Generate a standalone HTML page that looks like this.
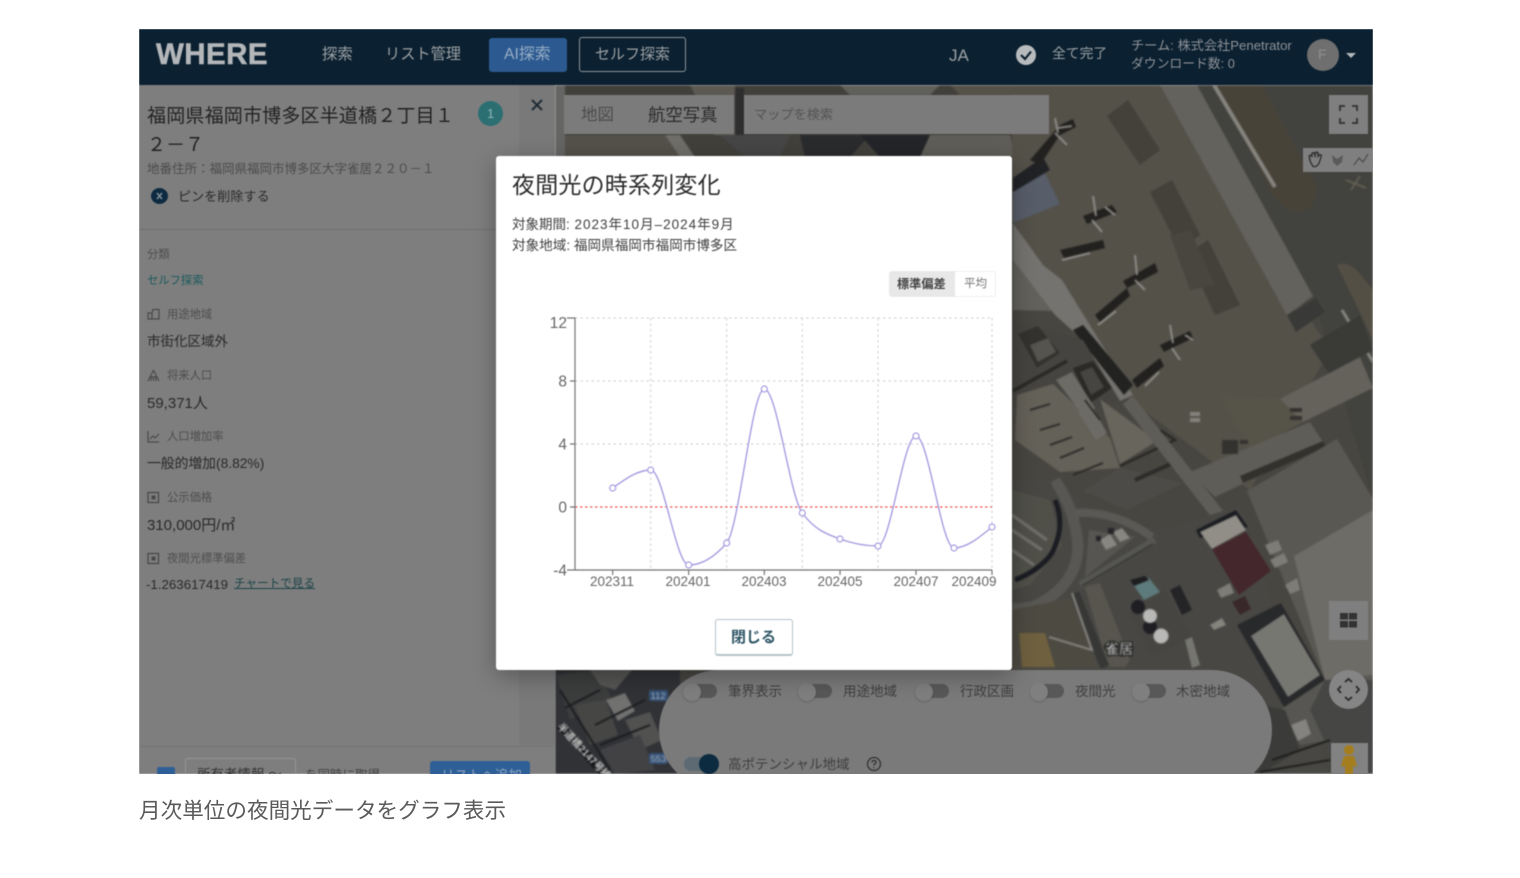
<!DOCTYPE html>
<html lang="ja">
<head>
<meta charset="utf-8">
<title>WHERE</title>
<style>
html,body{margin:0;padding:0;background:#fff;width:1520px;height:878px;overflow:hidden}
body{font-family:"Liberation Sans","Noto Sans CJK JP",sans-serif;position:relative}
#shot{position:absolute;left:0;top:0;width:1520px;height:878px;clip-path:inset(29px 147px 104px 139px);filter:blur(.4px)}
.a{position:absolute}
.t{position:absolute;white-space:nowrap;line-height:1}
.sw{position:absolute;width:20px;height:14px;background:#585858;border-radius:0 7px 7px 0}
.kn{position:absolute;width:18px;height:18px;border-radius:50%;background:#7f7f7f;box-shadow:0 1px 2px rgba(0,0,0,.18)}
.lab{color:#4e4e4e;font-size:11.3px}
.tg{color:#3f3f3f;font-size:13.5px}
</style>
</head>
<body>
<div id="shot">
  <!-- map -->
  <svg class="a" style="left:0;top:0;filter:blur(.7px) saturate(.75) brightness(.95)" width="1520" height="878" viewBox="0 0 1520 878">
    <rect x="555" y="85" width="818" height="689" fill="#4d4a42"/>
    <!-- top sliver -->
    <rect x="555" y="85" width="460" height="72" fill="#46433d"/>
    <polygon points="555,135 680,135 690,157 555,157" fill="#59554b"/>
    <polygon points="665,135 680,135 695,157 680,157" fill="#76746d"/>
    <polygon points="555,85 565,85 565,157 555,157" fill="#6a6a68"/>
    <polygon points="690,85 735,85 735,135 715,135" fill="#625e55"/>
    <polygon points="720,135 790,135 780,157 745,157" fill="#4a4a49"/>
    <polygon points="800,135 870,135 850,157 805,157" fill="#2c2d30"/>
    <polygon points="860,135 960,135 945,157 880,157" fill="#24272c"/>
    <polygon points="930,135 1010,135 1015,157 920,157" fill="#66635a"/>
    <polygon points="840,85 940,85 930,95 850,95" fill="#66665f"/>
    <polygon points="950,85 1012,85 1050,95 960,95" fill="#5a564b"/>
    <rect x="735" y="88" width="9" height="47" fill="#303030"/>
    <!-- apron -->
    <polygon points="1012,85 1160,85 1330,350 1250,490 1130,400 1012,220" fill="#59554a"/>
    <polygon points="1107,116 1128,100 1160,150 1140,165" fill="#47443b"/>
    <polygon points="1150,192 1172,180 1200,235 1180,250" fill="#47443b"/>
    <polygon points="1187,254 1208,240 1240,305 1215,315" fill="#47443b"/>
    <polygon points="1170,235 1190,230 1215,285 1190,290" fill="#4d4a40"/>
    <!-- light taxi strip + right dark area -->
    <polygon points="1197,85 1373,85 1373,500 1313,296" fill="#464640"/>
    <polygon points="1160,85 1197,85 1313,296 1287,315" fill="#696760"/>
    <path d="M1215,85 L1262,85 L1316,185 Q1318,212 1295,212 Q1275,205 1265,180 Z" fill="#4e4639"/>
    <path d="M1214,85 L1275,187" stroke="#8d8b83" stroke-width="4" fill="none"/>
    <path d="M1360,176 l-9,14 M1346,180 l20,8" stroke="#6a6552" stroke-width="1.800"/>
    <path d="M1337,265 q12,-5 24,10 L1373,290 L1373,340 Z" fill="#5a5344"/>
    <path d="M1342,310 L1373,362" stroke="#8d8b83" stroke-width="3" fill="none"/>
    <polygon points="1287,315 1316,298 1325,312 1296,332" fill="#3c3c39"/>
    <polygon points="1310,345 1360,315 1373,350 1330,375" fill="#3d3d39"/>
    <polygon points="1280,399 1360,357 1373,388 1303,422" fill="#6a675d"/>
    <polygon points="1220,395 1280,399 1303,422 1250,450" fill="#5c5849"/>
    <!-- lot and parking -->
    <polygon points="1190,472 1310,422 1325,445 1215,497" fill="#65625a"/>
    <polygon points="1240,476 1323,441 1326,447 1243,483" fill="#35342f"/>
    <g fill="#8d8a80"><rect x="1190" y="412" width="10" height="4"/><rect x="1190" y="418" width="10" height="4"/></g>
    <g fill="#36352f"><rect x="1222" y="440" width="16" height="14"/><rect x="1290" y="408" width="12" height="4"/><rect x="1290" y="416" width="12" height="4"/><rect x="1240" y="440" width="8" height="4"/></g>
    <!-- bottom right light area -->
    <polygon points="1247,491 1337,439 1373,499 1373,680 1325,680" fill="#605d54"/>
    <polygon points="1294,556 1373,510 1373,675 1325,680" fill="#75726a"/>
    <!-- terminal -->
    <polygon points="1013,227 1043,265 1053,311 1013,310" fill="#67665f"/>
    <polygon points="1013,223 1043,265 1062,280 1133,395 1120,401 1083,340 1055,315 1013,260" fill="#7a7973"/>
    <polygon points="1013,188 1043,169 1060,204 1013,223" fill="#596273"/>
    <polygon points="1013,178 1043,157 1050,170 1013,192" fill="#222429"/>
    <polygon points="1073,330 1083,325 1133,385 1124,395" fill="#242422"/>
    <!-- planes -->
    <g fill="#242320">
      <polygon points="1030,160 1060,125 1073,119 1076,127 1060,135 1040,165"/>
      <polygon points="1083,216 1112,205 1117,212 1087,224"/>
      <polygon points="1060,250 1103,240 1105,248 1064,258"/>
      <polygon points="1123,281 1155,263 1158,272 1127,288"/>
      <polygon points="1095,315 1127,288 1130,296 1100,322"/>
      <polygon points="1160,345 1190,331 1193,338 1164,352"/>
      <polygon points="1132,380 1160,358 1164,366 1137,388"/>
    </g>
    <g stroke="#9c9a92" stroke-width="1.800" fill="none">
      <path d="M1055,118 l3,15 M1058,128 l14,-2 M1055,133 l12,12"/>
      <path d="M1093,196 l3,20 M1092,220 l10,12 M1105,207 l10,8"/>
      <path d="M1135,255 l2,20 M1135,280 l10,10"/>
      <path d="M1170,325 l3,18 M1172,348 l8,12 M1185,335 l8,5"/>
      <path d="M1062,260 l28,-7 M1098,325 l18,-14 M1145,386 l14,-14"/>
    </g>
    <!-- buildings -->
    <polygon points="1013,320 1083,340 1120,401 1050,420 1013,400" fill="#4a4842"/>
    <polygon points="1018,334 1038,326 1060,353 1037,368" fill="#363531"/>
    <polygon points="1030,345 1048,338 1056,352 1038,362" fill="#5a5850"/>
    <polygon points="1073,368 1093,361 1112,388 1090,403" fill="#2c2b28"/>
    <polygon points="1080,372 1092,367 1104,387 1091,395" fill="#4b4944"/>
    <path d="M1013,391 L1067,361" stroke="#2c2b28" stroke-width="3.500"/>
    <polygon points="1017,395 1053,384 1110,438 1120,468 1060,472 1015,440" fill="#6a6659"/>
    <polygon points="1056,380 1072,372 1095,408 1085,418" fill="#72716a"/>
    <polygon points="1078,412 1092,406 1107,433 1096,440" fill="#72716a"/>
    <polygon points="1100,399 1157,441 1120,464" fill="#6d6a5e"/>
    <path d="M1120,466 L1175,440 L1160,430" stroke="#2a2a27" stroke-width="2.500" fill="none"/>
    <polygon points="1120,468 1183,483 1127,510 1083,491" fill="#504f49"/>
    <path d="M1135,480 L1175,462" stroke="#2e2e2b" stroke-width="4"/>
    <g stroke="#2b2a27" stroke-width="1.800">
      <path d="M1040,430 l20,-6 M1050,445 l22,-8 M1060,458 l24,-10 M1085,400 l15,20 M1030,410 l20,-6 M1073,475 l30,-12"/>
    </g>
    <!-- ring & lower -->
    <path d="M1128,400 L1222,520" stroke="#64625a" stroke-width="13" fill="none"/>
    <polygon points="1012,480 1060,480 1090,510 1160,530 1240,506 1330,774 1012,774" fill="#4c4b46"/>
    <polygon points="1012,490 1050,500 1062,545 1030,585 1012,590" fill="#55544b"/>
    <path d="M1055,480 Q1075,510 1078,545 Q1078,585 1035,606 Q1020,610 1012,608" fill="none" stroke="#5d5c56" stroke-width="11"/>
    <path d="M1055,500 Q1066,525 1052,553 Q1040,570 1015,580" fill="none" stroke="#1c1f27" stroke-width="5"/>
    <path d="M1012,515 l35,25 M1012,530 l30,20 M1012,550 l22,15" stroke="#77756c" stroke-width="3"/>
    <path d="M1075,513 Q1115,510 1152,537" stroke="#5f5e58" stroke-width="8" fill="none"/>
    <polygon points="1089,530 1135,537 1085,577" fill="#5b5a54"/>
    <path d="M1080,585 L1155,540" stroke="#5a5955" stroke-width="7" fill="none"/>
    <path d="M1082,586 L1153,544" stroke="#37372f" stroke-width="1.500" fill="none"/>
    <g fill="#8e8d86"><polygon points="1113,532 1122,528 1130,538 1120,542"/><polygon points="1100,540 1110,534 1117,545 1106,550"/></g>
    <g fill="#26252b"><rect x="1108" y="528" width="6" height="6"/><rect x="1096" y="536" width="5" height="5"/></g>
    <polygon points="1085,587 1100,583 1130,660 1125,667 1108,667" fill="#5c5a4f"/>
    <path d="M1075,593 L1105,667" stroke="#3a3a38" stroke-width="9"/>
    <polygon points="1012,610 1070,598 1098,667 1012,670" fill="#524e42"/>
    <polygon points="1019,633 1045,633 1055,667 1022,667" fill="#7a6636"/>
    <path d="M1072,593 L1092,650 L1049,637" stroke="#8a8880" stroke-width="2.200" fill="none"/>
    <polygon points="1129,613 1165,590 1192,637 1152,657" fill="#4a4945"/>
    <polygon points="1132,583 1149,578 1160,592 1144,600" fill="#5a8385"/>
    <polygon points="1130,580 1145,576 1149,580 1134,586" fill="#1f2024"/>
    <circle cx="1138" cy="607" r="7" fill="#1f2027"/>
    <circle cx="1150" cy="627" r="7" fill="#1f2027"/>
    <circle cx="1150" cy="616" r="7" fill="#c2c2bf"/>
    <circle cx="1161" cy="636" r="7.500" fill="#c2c2bf"/>
    <polygon points="1170,590 1180,585 1192,610 1182,615" fill="#26262a"/>
    <polygon points="1185,640 1192,637 1200,665 1192,668" fill="#7d7c76"/>
    <!-- maroon building -->
    <polygon points="1196,530 1236,510 1248,527 1200,538" fill="#1c1e25"/>
    <polygon points="1200,532 1236,515 1246,530 1212,549" fill="#98958a"/>
    <polygon points="1212,549 1246,532 1271,571 1239,595" fill="#4e272e"/>
    <polygon points="1265,545 1278,540 1282,550 1270,555" fill="#85837b"/>
    <polygon points="1270,560 1284,553 1288,562 1275,568" fill="#85837b"/>
    <polygon points="1217,590 1230,583 1234,593 1221,598" fill="#85837b"/>
    <polygon points="1232,602 1245,596 1251,609 1240,615" fill="#40292a"/>
    <polygon points="1285,585 1297,578 1300,590 1290,594" fill="#85837b"/>
    <g fill="#8c8a80"><polygon points="1210,625 1222,618 1226,625 1214,630"/></g>
    <!-- big white building -->
    <polygon points="1237,625 1281,603 1325,680 1284,707" fill="#2a2b2e"/>
    <polygon points="1251,636 1284,614 1320,675 1288,697" fill="#7e7d77"/>
    <polygon points="1280,710 1325,680 1355,715 1330,740 1300,745" fill="#5c5b55"/>
    <polygon points="1291,725 1306,719 1311,734 1298,741" fill="#8b8a85"/>
    <polygon points="1325,680 1373,680 1373,774 1340,774 1310,710" fill="#4a4a48"/>
    <polygon points="1240,700 1285,710 1300,750 1260,774 1230,774" fill="#3e3e3c"/>
    <path d="M1272,760 L1330,740 M1260,772 L1330,760" stroke="#1c1c1c" stroke-width="1.800"/>
    <!-- left bottom urban sliver -->
    <rect x="555" y="670" width="125" height="104" fill="#33353a"/>
    <polygon points="556,675 600,670 612,700 570,720" fill="#3f4040"/>
    <polygon points="575,705 606,700 618,735 590,745" fill="#4a4a48"/>
    <polygon points="606,700 625,693 635,711 618,721" fill="#777775"/>
    <polygon points="625,720 650,712 662,740 640,750" fill="#555553"/>
    <polygon points="600,750 640,735 655,770 615,774" fill="#45454a"/>
    <polygon points="590,670 632,670 615,690 600,685" fill="#5a5a58"/>
    <g stroke="#1d1e22" stroke-width="2"><path d="M560,690 L610,770 M595,725 L645,700 M600,745 L650,725 M565,708 L600,690"/></g>
    <path d="M560,725 L604,774" stroke="#16171a" stroke-width="8"/>
    <text transform="translate(557,727) rotate(47)" font-size="10" font-weight="bold" fill="#d5d5d5" font-family="Liberation Sans,Noto Sans CJK JP,sans-serif">半道橋2147号線</text>
    <rect x="649" y="690" width="19" height="11" rx="2" fill="#2f5688"/>
    <rect x="649" y="753" width="19" height="11" rx="2" fill="#2f5688"/>
    <text x="650.500" y="699" font-size="9.500" fill="#a9b9cf" font-family="Liberation Sans">112</text>
    <text x="650.500" y="762" font-size="9.500" fill="#a9b9cf" font-family="Liberation Sans">553</text>
    <text x="1105" y="654" font-size="14" fill="#c9c9c7" stroke="#1d1d1d" stroke-width="2.500" paint-order="stroke" font-family="Liberation Sans,Noto Sans CJK JP,sans-serif">雀居</text>
  </svg>

  <!-- top map controls -->
  <div class="a" style="left:564px;top:95px;width:170px;height:39px;background:#7b7b7b"></div>
  <div class="t" style="left:581px;top:107px;font-size:16.500px;color:#4c4c4c">地図</div>
  <div class="t" style="left:648px;top:107px;font-size:17.400px;color:#2a2a2a">航空写真</div>
  <div class="a" style="left:744px;top:95px;width:305px;height:39px;background:#7b7b7b"></div>
  <div class="t" style="left:754px;top:108px;font-size:13.200px;color:#545454">マップを検索</div>
  <div class="a" style="left:1329px;top:95px;width:39px;height:39px;background:#7f7f7f"></div>
  <svg class="a" style="left:1329px;top:95px" width="39" height="39" fill="none" stroke="#3a3a3a" stroke-width="2"><path d="M11,16 V11 H16 M23,11 H28 V16 M28,23 V28 H23 M16,28 H11 V23"/></svg>
  <div class="a" style="left:1303px;top:148px;width:70px;height:24px;background:#7f7f7f"></div>
  <svg class="a" style="left:1303px;top:148px" width="70" height="24" fill="none" stroke="#2f2f2f" stroke-width="1.300"><path d="M7,11 l-1,-3 l2,-1 l1,2 l0,-4 l2,-.5 l1,3.500 l1,-4 l2,.5 l0,4 l2,-2 l1.500,1 l-1.500,5 q-1,4 -4,6 l-3,0 q-2,-3 -3.500,-7 Z"/><path d="M29,7 l5,4 l6,-4 l-1,7 l-5,4 l-4,-4 Z" fill="#5a5a5a" stroke="none"/><path d="M51,17 l5,-7 l4,4 l5,-8" stroke="#505050"/></svg>
  <div class="a" style="left:1329px;top:601px;width:39px;height:39px;background:#7f7f7f"></div>
  <svg class="a" style="left:1329px;top:601px" width="39" height="39" fill="#333"><rect x="11" y="12" width="8" height="6.500"/><rect x="20" y="12" width="8" height="6.500"/><rect x="11" y="20" width="8" height="6.500"/><rect x="20" y="20" width="8" height="6.500"/></svg>
  <div class="a" style="left:1329px;top:670px;width:39px;height:39px;border-radius:50%;background:#858585"></div>
  <svg class="a" style="left:1329px;top:670px" width="39" height="39" fill="none" stroke="#333" stroke-width="2"><path d="M16,12 l3.500,-3 l3.500,3 M16,27 l3.500,3 l3.500,-3 M12,16 l-3,3.500 l3,3.500 M27,16 l3,3.500 l-3,3.500"/></svg>
  <div class="a" style="left:1331px;top:743px;width:37px;height:38px;background:#828282"></div>
  <svg class="a" style="left:1331px;top:741px" width="37" height="33" fill="#a47e1e"><circle cx="18" cy="9" r="5"/><path d="M13,15 h10 l3,10 l-3,1 l-1,-3 l0,10 h-8 l0,-10 l-1,3 l-3,-1 Z"/></svg>

  <!-- toggles pill -->
  <div class="a" style="left:659px;top:670px;width:613px;height:120px;border-radius:60px;background:#7a7a7a"></div>
  <div class="sw" style="left:697px;top:684px"></div><div class="kn" style="left:683px;top:683px"></div>
  <div class="t tg" style="left:728px;top:685px">筆界表示</div>
  <div class="sw" style="left:812px;top:684px"></div><div class="kn" style="left:798px;top:683px"></div>
  <div class="t tg" style="left:843px;top:685px">用途地域</div>
  <div class="sw" style="left:929px;top:684px"></div><div class="kn" style="left:915px;top:683px"></div>
  <div class="t tg" style="left:960px;top:685px">行政区画</div>
  <div class="sw" style="left:1044px;top:684px"></div><div class="kn" style="left:1030px;top:683px"></div>
  <div class="t tg" style="left:1075px;top:685px">夜間光</div>
  <div class="sw" style="left:1146px;top:684px"></div><div class="kn" style="left:1132px;top:683px"></div>
  <div class="t tg" style="left:1176px;top:685px">木密地域</div>
  <div class="a" style="left:684px;top:757px;width:30px;height:14px;border-radius:7px;background:#5d6a73"></div>
  <div class="a" style="left:699px;top:754px;width:20px;height:20px;border-radius:50%;background:#0c2a40"></div>
  <div class="t tg" style="left:728px;top:758px">高ポテンシャル地域</div>
  <svg class="a" style="left:866px;top:756px" width="16" height="16" fill="none" stroke="#333" stroke-width="1.300"><circle cx="8" cy="8" r="6.500"/><path d="M6,6.500 q0,-2 2,-2 q2,0 2,1.800 q0,1.200 -2,2.200 v1"/><path d="M8,11 v1.200"/></svg>

  <!-- left panel -->
  <div class="a" style="left:139px;top:85px;width:416px;height:689px;background:#7e7e7e"></div>
  <div class="a" style="left:519px;top:85px;width:36px;height:660px;background:#797979"></div>
  <div class="t" style="left:147px;top:107px;font-size:19px;letter-spacing:.19px;color:#222">福岡県福岡市博多区半道橋２丁目１</div>
  <div class="t" style="left:147px;top:136px;font-size:19px;color:#222">２－７</div>
  <div class="a" style="left:478px;top:101px;width:25px;height:25px;border-radius:50%;background:#2b6f73"></div>
  <div class="t" style="left:487px;top:107px;font-size:13px;color:#8fb5b7">1</div>
  <svg class="a" style="left:530px;top:98px" width="14" height="14" stroke="#1f2c36" stroke-width="2" fill="none"><path d="M2,2 L12,12 M12,2 L2,12"/></svg>
  <div class="t" style="left:147px;top:163px;font-size:12.500px;color:#4c4c4c">地番住所：福岡県福岡市博多区大字雀居２２０－１</div>
  <div class="a" style="left:151px;top:188px;width:17px;height:16px;border-radius:50%;background:#0d2a40"></div>
  <svg class="a" style="left:151px;top:188px" width="17" height="16" stroke="#7e8c96" stroke-width="1.600"><path d="M6,5 L11,11 M11,5 L6,11"/></svg>
  <div class="t" style="left:178px;top:190px;font-size:13px;color:#2a2a2a;letter-spacing:.1px">ピンを削除する</div>
  <div class="a" style="left:139px;top:229px;width:380px;height:1px;background:#6f6f6f"></div>
  <div class="t lab" style="left:147px;top:250px">分類</div>
  <div class="t" style="left:147px;top:276px;font-size:11.300px;color:#1b5a5c">セルフ探索</div>

  <svg class="a" style="left:147px;top:308px" width="13" height="13" fill="none" stroke="#4a4a4a" stroke-width="1.200"><path d="M1,11 V5 H5 L6,1.500 H12 V11 Z M5,5 V11"/></svg>
  <div class="t lab" style="left:167px;top:310px">用途地域</div>
  <div class="t" style="left:147px;top:335px;font-size:13.500px;color:#2a2a2a">市街化区域外</div>
  <svg class="a" style="left:147px;top:369px" width="13" height="13" fill="none" stroke="#4a4a4a" stroke-width="1.200"><path d="M1,12 L4,6 L6.500,1.500 L9,6 L12,12 M4,12 V8 H9 V12 M6.500,8 V12"/></svg>
  <div class="t lab" style="left:167px;top:371px">将来人口</div>
  <div class="t" style="left:147px;top:396px;font-size:15px;color:#2a2a2a">59,371人</div>
  <svg class="a" style="left:147px;top:430px" width="13" height="13" fill="none" stroke="#4a4a4a" stroke-width="1.200"><path d="M1,1 V12 H12 M3,9 L6,6 L8,8 L12,4"/></svg>
  <div class="t lab" style="left:167px;top:432px">人口増加率</div>
  <div class="t" style="left:147px;top:457px;font-size:13.800px;color:#2a2a2a">一般的増加(8.82%)</div>
  <svg class="a" style="left:147px;top:491px" width="13" height="13"><rect x="1" y="1.500" width="10.500" height="10" fill="none" stroke="#4a4a4a" stroke-width="1.300"/><rect x="4.500" y="4.500" width="4" height="4" fill="#4a4a4a"/></svg>
  <div class="t lab" style="left:167px;top:493px">公示価格</div>
  <div class="t" style="left:147px;top:518px;font-size:15px;color:#2a2a2a">310,000円/㎡</div>
  <svg class="a" style="left:147px;top:552px" width="13" height="13"><rect x="1" y="1.500" width="10.500" height="10" fill="none" stroke="#4a4a4a" stroke-width="1.300"/><rect x="4.500" y="4.500" width="4" height="4" fill="#4a4a4a"/></svg>
  <div class="t lab" style="left:167px;top:554px">夜間光標準偏差</div>
  <div class="t" style="left:146px;top:578px;font-size:13.300px;color:#2a2a2a">-1.263617419</div>
  <div class="t" style="left:234px;top:578px;font-size:11.600px;color:#1d4448;text-decoration:underline">チャートで見る</div>

  <div class="a" style="left:139px;top:746px;width:416px;height:1px;background:#747474"></div>
  <div class="a" style="left:157px;top:767px;width:18px;height:18px;border-radius:2px;background:#2f5f97"></div>
  <div class="a" style="left:185px;top:758px;width:109px;height:30px;border:1px solid #969696;border-radius:3px"></div>
  <div class="t" style="left:197px;top:768px;font-size:13.500px;color:#333">所有者情報 ～</div>
  <div class="t" style="left:305px;top:769px;font-size:12.500px;color:#444">を同時に取得</div>
  <div class="a" style="left:430px;top:761px;width:100px;height:30px;border-radius:3px;background:#2f5f97"></div>
  <div class="t" style="left:441px;top:769px;font-size:13.500px;color:#8ba3c0">リストへ追加</div>

  <!-- top nav -->
  <div class="a" style="left:139px;top:29px;width:1234px;height:56px;background:#0b2030"></div>
  <div class="t" style="left:156px;top:40px;font-size:29.500px;font-weight:bold;letter-spacing:.45px;color:#b4b7ba;-webkit-text-stroke:.5px #b4b7ba">WHERE</div>
  <div class="t" style="left:322px;top:47px;font-size:15.400px;color:#9ba0a4">探索</div>
  <div class="t" style="left:385px;top:47px;font-size:15.200px;color:#9ba0a4">リスト管理</div>
  <div class="a" style="left:489px;top:38px;width:78px;height:34px;background:#2c5a90;border-radius:3px"></div>
  <div class="t" style="left:504px;top:47px;font-size:15.800px;color:#97adc6">AI探索</div>
  <div class="a" style="left:579px;top:37px;width:105px;height:33px;border:1.500px solid #8d9499;border-radius:3px"></div>
  <div class="t" style="left:595px;top:47px;font-size:15px;color:#9ba0a4">セルフ探索</div>
  <div class="t" style="left:949px;top:47px;font-size:17px;color:#9ba0a4">JA</div>
  <svg class="a" style="left:1016px;top:45px" width="20" height="20"><circle cx="10" cy="10" r="10" fill="#b8bbbd"/><path d="M5,10 L9,14 L15,6.500" stroke="#0b2030" stroke-width="2.200" fill="none"/></svg>
  <div class="t" style="left:1052px;top:47px;font-size:13.800px;color:#9ba0a4">全て完了</div>
  <div class="t" style="left:1131px;top:39px;font-size:13.200px;color:#8d9298">チーム: 株式会社Penetrator</div>
  <div class="t" style="left:1131px;top:58px;font-size:12.800px;color:#8d9298">ダウンロード数: 0</div>
  <div class="a" style="left:1307px;top:39px;width:32px;height:32px;border-radius:50%;background:#6f6f6f"></div>
  <div class="t" style="left:1318px;top:47px;font-size:14px;color:#8f8f8f">F</div>
  <div class="a" style="left:1346px;top:53px;width:0;height:0;border-left:5px solid transparent;border-right:5px solid transparent;border-top:5px solid #b5b8ba"></div>

  <!-- modal -->
  <div class="a" style="left:496px;top:156px;width:516px;height:514px;background:#fff;border-radius:3px;box-shadow:0 6px 24px rgba(0,0,0,.3)"></div>
  <div class="t" style="left:512px;top:174px;font-size:23px;letter-spacing:.2px;color:#2a2a2a">夜間光の時系列変化</div>
  <div class="t" style="left:512px;top:218px;font-size:13.500px;letter-spacing:1px;color:#3f3f3f"><span style="letter-spacing:0">対象期間:</span> 2023年10月–2024年9月</div>
  <div class="t" style="left:512px;top:239px;font-size:13.600px;color:#3f3f3f">対象地域: 福岡県福岡市福岡市博多区</div>
  <div class="a" style="left:889px;top:271px;width:66px;height:26px;background:#e8e8e8;border-radius:3px 0 0 3px"></div>
  <div class="a" style="left:955px;top:271px;width:40px;height:24px;border:1px solid #eee;border-left:0;border-radius:0 3px 3px 0"></div>
  <div class="t" style="left:897px;top:278px;font-size:12.200px;font-weight:bold;color:#444">標準偏差</div>
  <div class="t" style="left:964px;top:279px;font-size:11.500px;color:#777">平均</div>

  <svg class="a" style="left:496px;top:156px;overflow:visible" width="516" height="514" viewBox="496 156 516 514">
    <g stroke="#cfcfcf" stroke-width="1" stroke-dasharray="2.500 3" fill="none">
      <path d="M575,318 H992 M575,381 H992 M575,444 H992"/>
      <path d="M650.700,318 V570 M726.700,318 V570 M802.300,318 V570 M878,318 V570 M992,318 V570"/>
    </g>
    <path d="M575,507 H992" stroke="#f05a5a" stroke-width="1.300" stroke-dasharray="2.500 2.500" fill="none"/>
    <path d="M567,318 H575 V570 H992 M570,381 H575 M570,444 H575 M570,507 H575 M567,570 H575 M612.700,570 V575 M688.700,570 V575 M764.300,570 V575 M840,570 V575 M916,570 V575 M992,570 V575" stroke="#757575" stroke-width="1.200" fill="none"/>
    <path d="M612.700,488 C625.400,479 638,470 650.700,470 C663.400,470 676,565 688.700,565 C701.400,565 714,557.700 726.700,543 C739.200,528.300 751.800,389 764.300,389 C777,389 789.600,495.700 802.300,513 C815,530.300 827.400,534.400 840,539 C852.700,543.600 865.300,546 878,546 C890.700,546 903.300,436 916,436 C928.700,436 941.300,548 954,548 C966.700,548 979.300,537.500 992,527" stroke="#a79ce0" stroke-width="1.400" fill="none"/>
    <g fill="#fff" stroke="#a79ce0" stroke-width="1.200">
      <circle cx="612.700" cy="488" r="3"/><circle cx="650.700" cy="470" r="3"/><circle cx="688.700" cy="565" r="3"/><circle cx="726.700" cy="543" r="3"/><circle cx="764.300" cy="389" r="3"/><circle cx="802.300" cy="513" r="3"/><circle cx="840" cy="539" r="3"/><circle cx="878" cy="546" r="3"/><circle cx="916" cy="436" r="3"/><circle cx="954" cy="548" r="3"/><circle cx="992" cy="527" r="3"/>
    </g>
    <g font-family="Liberation Sans" font-size="15.500" fill="#666" text-anchor="end">
      <text x="567" y="328">12</text><text x="567" y="386.500">8</text><text x="567" y="449.500">4</text><text x="567" y="512.500">0</text><text x="567" y="575.500">-4</text>
    </g>
    <g font-family="Liberation Sans" font-size="13.500" fill="#666" text-anchor="middle">
      <text x="612" y="586">202311</text><text x="688" y="586">202401</text><text x="764" y="586">202403</text><text x="840" y="586">202405</text><text x="916" y="586">202407</text><text x="974" y="586">202409</text>
    </g>
  </svg>
  <div class="a" style="left:715px;top:619px;width:76px;height:34px;border:1px solid #b3c3c8;border-bottom:2px solid #b3c3c8;border-radius:3px;background:#fff"></div>
  <div class="t" style="left:731px;top:630px;font-size:15px;font-weight:bold;color:#2f5666">閉じる</div>
</div>

<div class="t" style="left:139px;top:800px;font-size:21.600px;color:#5a5a5a">月次単位の夜間光データをグラフ表示</div>
</body>
</html>
